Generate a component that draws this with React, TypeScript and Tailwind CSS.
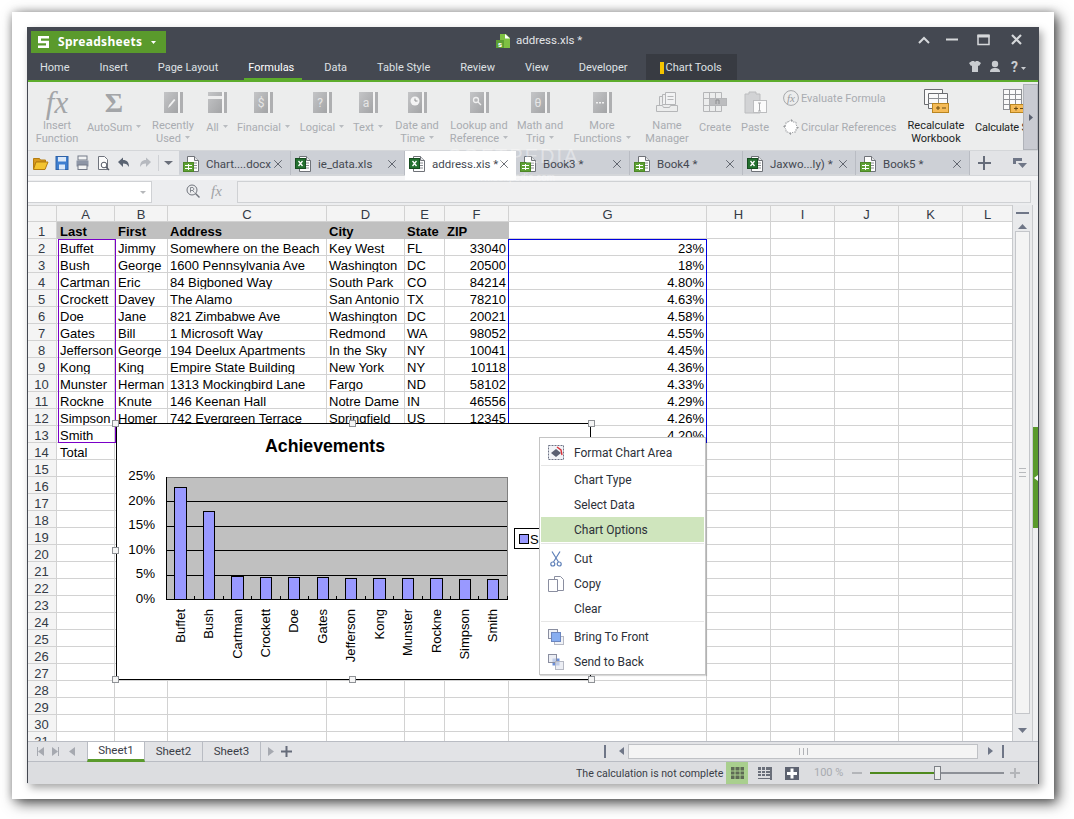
import { X } from 'lucide-react'
import type { ReactNode } from 'react'

const rows = [
  ['Buffet', 'Jimmy', 'Somewhere on the Beach', 'Key West', 'FL', '33040', '23%'],
  ['Bush', 'George', '1600 Pennsylvania Ave', 'Washington', 'DC', '20500', '18%'],
  ['Cartman', 'Eric', '84 Bigboned Way', 'South Park', 'CO', '84214', '4.80%'],
  ['Crockett', 'Davey', 'The Alamo', 'San Antonio', 'TX', '78210', '4.63%'],
  ['Doe', 'Jane', '821 Zimbabwe Ave', 'Washington', 'DC', '20021', '4.58%'],
  ['Gates', 'Bill', '1 Microsoft Way', 'Redmond', 'WA', '98052', '4.55%'],
  ['Jefferson', 'George', '194 Deelux Apartments', 'In the Sky', 'NY', '10041', '4.45%'],
  ['Kong', 'King', 'Empire State Building', 'New York', 'NY', '10118', '4.36%'],
  ['Munster', 'Herman', '1313 Mockingbird Lane', 'Fargo', 'ND', '58102', '4.33%'],
  ['Rockne', 'Knute', '146 Keenan Hall', 'Notre Dame', 'IN', '46556', '4.29%'],
  ['Simpson', 'Homer', '742 Evergreen Terrace', 'Springfield', 'US', '12345', '4.26%'],
  ['Smith', '', '', '', '', '', '4.20%'],
  ['Total', '', '', '', '', '', ''],
]

const columns = ['A', 'B', 'C', 'D', 'E', 'F', 'G', 'H', 'I', 'J', 'K', 'L']
const titles = ['Last', 'First', 'Address', 'City', 'State', 'ZIP']
const gridCols = 'grid grid-cols-[30px_58px_53px_159px_78px_40px_64px_198px_64px_64px_64px_64px_50px]'

const menuTabs = ['Home', 'Insert', 'Page Layout', 'Formulas', 'Data', 'Table Style', 'Review', 'View', 'Developer']

const bars = [
  { name: 'Buffet', x: 174, w: 12, top: 487 },
  { name: 'Bush', x: 203, w: 11, top: 511 },
  { name: 'Cartman', x: 231, w: 12, top: 576 },
  { name: 'Crockett', x: 260, w: 11, top: 577 },
  { name: 'Doe', x: 288, w: 11, top: 577 },
  { name: 'Gates', x: 317, w: 11, top: 577 },
  { name: 'Jefferson', x: 345, w: 11, top: 578 },
  { name: 'Kong', x: 373, w: 12, top: 578 },
  { name: 'Munster', x: 402, w: 11, top: 578 },
  { name: 'Rockne', x: 430, w: 12, top: 578 },
  { name: 'Simpson', x: 459, w: 11, top: 579 },
  { name: 'Smith', x: 487, w: 11, top: 579 },
]

const Caret = ({ color = '#b9bcc0' }: { color?: string }) => (
  <svg width="5" height="3" viewBox="0 0 5 3" className="inline-block ml-[4px] mb-[3px]">
    <path d="M0 0h5L2.5 3z" fill={color} />
  </svg>
)

const Book = ({ children }: { children?: ReactNode }) => (
  <svg width="19" height="21" viewBox="0 0 19 21">
    <defs>
      <linearGradient id="bookFill" x1="0" y1="0" x2="1" y2="1">
        <stop offset="0" stopColor="#c4c5c7" />
        <stop offset="1" stopColor="#a3a4a6" />
      </linearGradient>
    </defs>
    <rect x="0" y="0" width="14" height="21" fill="url(#bookFill)" />
    <rect x="14" y="0" width="2" height="21" fill="#f4f4f4" />
    <rect x="16" y="0" width="3" height="21" fill="#aeafb1" />
    {children}
  </svg>
)

const glyph = 'fill-[#e6e6e6]'

const ribbonItems: { lines: string[]; caret?: boolean; box: string; icon: ReactNode }[] = [
  {
    lines: ['Insert', 'Function'],
    box: 'w-[54px] ml-[3px]',
    icon: <span className="font-['Liberation_Serif',serif] italic text-[31px] leading-[21px] text-[#a3a5a8]">fx</span>,
  },
  {
    lines: ['AutoSum'],
    caret: true,
    box: 'w-[52px] ml-[4px]',
    icon: <span className="font-['Liberation_Serif',serif] font-bold text-[28px] leading-[21px] text-[#a3a5a8]">Σ</span>,
  },
  {
    lines: ['Recently', 'Used'],
    caret: true,
    box: 'w-[50px] ml-[8px]',
    icon: (
      <Book>
        <path d="M4 16l1-3 5-6 1.5 1-5 6z" fill="#f2f2f2" />
      </Book>
    ),
  },
  {
    lines: ['All'],
    caret: true,
    box: 'w-[26px] ml-[6px]',
    icon: (
      <Book>
        <rect x="0" y="4" width="14" height="3" fill="#eeeeee" />
      </Book>
    ),
  },
  {
    lines: ['Financial'],
    caret: true,
    box: 'w-[55px] ml-[6px]',
    icon: (
      <Book>
        <text x="7" y="15" textAnchor="middle" fontSize="12" className={glyph}>$</text>
      </Book>
    ),
  },
  {
    lines: ['Logical'],
    caret: true,
    box: 'w-[52px] ml-[5px]',
    icon: (
      <Book>
        <text x="7" y="15" textAnchor="middle" fontSize="12" className={glyph}>?</text>
      </Book>
    ),
  },
  {
    lines: ['Text'],
    caret: true,
    box: 'w-[34px] ml-[3px]',
    icon: (
      <Book>
        <text x="7" y="15" textAnchor="middle" fontSize="12" className={glyph}>a</text>
      </Book>
    ),
  },
  {
    lines: ['Date and', 'Time'],
    caret: true,
    box: 'w-[60px] ml-[2px]',
    icon: (
      <Book>
        <circle cx="7" cy="9" r="4.5" fill="#f4f4f4" />
        <path d="M7 6.5V9h2.5" stroke="#8f9092" fill="none" />
      </Book>
    ),
  },
  {
    lines: ['Lookup and', 'Reference'],
    caret: true,
    box: 'w-[62px] ml-[1px]',
    icon: (
      <Book>
        <circle cx="6" cy="8" r="2.5" stroke="#f0f0f0" strokeWidth="1.3" fill="none" />
        <path d="M8 10l3 3" stroke="#f0f0f0" strokeWidth="1.3" />
      </Book>
    ),
  },
  {
    lines: ['Math and', 'Trig'],
    caret: true,
    box: 'w-[60px]',
    icon: (
      <Book>
        <text x="7" y="15" textAnchor="middle" fontSize="12" className={glyph}>θ</text>
      </Book>
    ),
  },
  {
    lines: ['More', 'Functions'],
    caret: true,
    box: 'w-[60px] ml-[2px]',
    icon: (
      <Book>
        <path d="M3 10h2v1.5H3zM6 10h2v1.5H6zM9 10h2v1.5H9z" fill="#f0f0f0" />
      </Book>
    ),
  },
  {
    lines: ['Name', 'Manager'],
    box: 'w-[64px] ml-[3px]',
    icon: (
      <svg width="22" height="22" viewBox="0 0 22 22" fill="none" stroke="#b5b6b8">
        <path d="M3.5 15V5.5h3M6.5 14V3.5h3" />
        <path d="M9.5 1.5h10v12h-13" fill="#f2f3f4" />
        <path d="M9.5 1.5v12M11.5 5.5h6M11.5 8.5h6" />
        <path d="M.5 14.5h6l1 2h6l1-2h7v6H.5z" fill="#eceded" />
      </svg>
    ),
  },
  {
    lines: ['Create'],
    box: 'w-[32px]',
    icon: (
      <svg width="24" height="22" viewBox="0 0 24 22" fill="none" stroke="#b5b6b8">
        <path d="M.5 1.5h18v19H.5zM.5 7.5h18M.5 14.5h18M6.5 1.5v19M12.5 1.5v19" />
        <rect x="6.5" y="7.5" width="17" height="7" fill="#bcbdbf" />
        <path d="M13 13V9h3v4" stroke="#8c8d8f" />
      </svg>
    ),
  },
  {
    lines: ['Paste'],
    box: 'w-[32px] ml-[8px]',
    icon: (
      <svg width="23" height="23" viewBox="0 0 23 23">
        <path d="M1 3h4V1h7v2h4v19H1z" fill="#d2d3d5" stroke="#bcbdbf" />
        <rect x="9.5" y="9.5" width="13" height="12" fill="#fbfbfb" stroke="#bcbdbf" />
        <path d="M14 12h3M14 20h3M15.5 12v8" stroke="#a8a9ab" fill="none" />
      </svg>
    ),
  },
]

const RecalcIcon = () => (
  <svg width="25" height="24" viewBox="0 0 25 24" fill="none">
    <path d="M.5.5h18v15H.5z" fill="#fafafa" stroke="#6a6c70" />
    <path d="M4.5 4.5h19v15h-19z" fill="#fafafa" stroke="#6a6c70" />
    <path d="M4.5 9.5h19M4.5 14.5h19M14.5 4.5v15" stroke="#8e9094" />
    <rect x="8.5" y="14.5" width="16" height="9" fill="#f5bb57" stroke="#b98520" />
    <path d="M12 19h4M14 17v4M18 19h4" stroke="#6b4a10" />
  </svg>
)

const CalcIcon = () => (
  <svg width="24" height="24" viewBox="0 0 24 24" fill="none">
    <rect x=".5" y=".5" width="18" height="20" fill="#fafafa" stroke="#8e9094" />
    <path d="M.5 5.5h18M.5 10.5h18M.5 15.5h18M6.5.5v20M12.5.5v20" stroke="#8e9094" />
    <rect x="7.5" y="15.5" width="16" height="8" fill="#f5bb57" stroke="#b98520" />
    <path d="M11 19.5h4M13 17.5v4M17 19.5h4" stroke="#6b4a10" />
  </svg>
)

const DocIcon = ({ excel }: { excel?: boolean }) => (
  <svg width="17" height="16" viewBox="0 0 17 16" className="shrink-0">
    <path d="M4.5.5h7l4 4v11h-11z" fill="#fdfdfd" stroke="#6f7278" />
    <path d="M11.5.5v4h4" fill="#e4e5e7" stroke="#6f7278" />
    <path d="M11 7h3M11 9.5h3M11 12h3" stroke="#8a8d92" />
    {excel ? (
      <>
        <rect x=".5" y="2.5" width="10" height="10" fill="#23702f" stroke="#174d20" />
        <path d="M3.5 5l4 5M7.5 5l-4 5" stroke="#ffffff" strokeWidth="1.3" />
      </>
    ) : (
      <>
        <rect x=".5" y="6.5" width="10" height="9" fill="#5da032" stroke="#4c8627" />
        <path d="M2 9.5h7M2 12.5h7M5.5 8v6" stroke="#ffffff" />
      </>
    )}
  </svg>
)

const tabs = [
  { label: 'Chart....docx', box: 'w-[112px]', excel: false },
  { label: 'ie_data.xls', box: 'w-[114px]', excel: true },
  { label: 'address.xls *', box: 'w-[111px]', excel: true, active: true },
  { label: 'Book3 *', box: 'w-[114px]', excel: false },
  { label: 'Book4 *', box: 'w-[113px]', excel: false },
  { label: 'Jaxwo...ly) *', box: 'w-[113px]', excel: true },
  { label: 'Book5 *', box: 'w-[114px]', excel: false },
]

const ChartSvg = () => (
  <svg width="475" height="257" viewBox="116 423 475 257" shapeRendering="crispEdges" className="block">
    <rect x="116.5" y="423.5" width="474" height="256" fill="#ffffff" stroke="#000000" />
    <text x="325" y="452" textAnchor="middle" fontSize="17.7" fontWeight="700" fill="#000000" shapeRendering="auto">
      Achievements
    </text>
    <rect x="166.5" y="477.5" width="341" height="122" fill="#c0c0c0" stroke="#808080" />
    {[501, 526, 550, 575].map((y) => (
      <path key={y} d={`M167 ${y + 0.5}H507`} stroke="#000000" />
    ))}
    <path d="M166.5 477V600M166 599.5H508" stroke="#000000" fill="none" />
    {Array.from({ length: 13 }, (_, i) => (
      <path key={i} d={`M${Math.round(166 + i * 28.4) + 0.5} 596V600`} stroke="#000000" />
    ))}
    {['25%', '20%', '15%', '10%', '5%', '0%'].map((t, i) => (
      <text key={t} x="155" y={480 + i * 24.6} textAnchor="end" fontSize="13.33" fill="#000000">
        {t}
      </text>
    ))}
    {bars.map((b) => (
      <g key={b.name}>
        <rect x={b.x + 0.5} y={b.top + 0.5} width={b.w} height={599 - b.top} fill="#9999ff" stroke="#000000" />
        <text
          transform={`translate(${b.x + b.w / 2 + 4.5} 609) rotate(-90)`}
          textAnchor="end"
          fontSize="13"
          fill="#000000"
        >
          {b.name}
        </text>
      </g>
    ))}
    <rect x="514.5" y="528.5" width="70" height="20" fill="#ffffff" stroke="#000000" />
    <rect x="519.5" y="534.5" width="9" height="9" fill="#9999ff" stroke="#000000" />
    <text x="530" y="544" fontSize="13" fill="#000000">Series1</text>
  </svg>
)

const Handle = ({ box }: { box: string }) => (
  <div className={`absolute w-[7px] h-[7px] bg-[#f4f4f4] border border-[#8f9296] ${box}`} />
)

const MenuRow = ({ label, icon, active }: { label: string; icon?: ReactNode; active?: boolean }) => (
  <div className={`flex items-center h-[25px] mx-[1px] ${active ? 'bg-[#cfe5bd]' : ''}`}>
    <div className="w-[34px] flex justify-center ml-[-2px] mr-[1px]">{icon}</div>
    <span className="pt-[1px]">{label}</span>
  </div>
)

const MenuLine = () => <div className="h-px bg-[#e6e6e6] mx-[1px]" />

const ContextMenu = () => (
  <div className="absolute left-[512px] top-[232px] w-[167px] h-[238px] bg-white border border-[#c4c4c4] shadow-[1px_1px_1px_rgba(0,0,0,0.15)] pt-[2px] text-[12px] text-[#2c3038] font-['Roboto',sans-serif]">
    <MenuRow
      label="Format Chart Area"
      icon={
        <svg width="16" height="16" viewBox="0 0 16 16">
          <rect x=".5" y=".5" width="15" height="14" fill="#f2f4f8" stroke="#6d7285" strokeDasharray="2 1" />
          <path d="M3 8l5-4 5 4-5 4z" fill="#5a6072" />
          <path d="M9 2l4 3 1 5" stroke="#d8333a" strokeWidth="1.4" fill="none" />
        </svg>
      }
    />
    <MenuLine />
    <div className="h-[1px]" />
    <MenuRow label="Chart Type" />
    <MenuRow label="Select Data" />
    <MenuRow label="Chart Options" active />
    <div className="h-[1px]" />
    <MenuLine />
    <div className="h-[2px]" />
    <MenuRow
      label="Cut"
      icon={
        <svg width="12" height="16" viewBox="0 0 12 16" fill="none" stroke="#5f80b8" strokeWidth="1.2">
          <path d="M2 .5l6.5 10.5M10 .5L3.5 11" />
          <circle cx="2.8" cy="13" r="2" />
          <circle cx="9.2" cy="13" r="2" />
        </svg>
      }
    />
    <MenuRow
      label="Copy"
      icon={
        <svg width="16" height="16" viewBox="0 0 16 16" fill="#ffffff" stroke="#8a8ea0">
          <path d="M6.5.5h6l3 3v11h-9z" />
          <path d="M.5 3.5h9v12h-9z" />
        </svg>
      }
    />
    <MenuRow label="Clear" />
    <MenuLine />
    <div className="h-[2px]" />
    <MenuRow
      label="Bring To Front"
      icon={
        <svg width="16" height="16" viewBox="0 0 16 16">
          <rect x=".5" y=".5" width="9" height="9" fill="#f0f2f7" stroke="#8a8ea0" />
          <rect x="6.5" y="7.5" width="9" height="8" fill="#f0f2f7" stroke="#b6b9c4" />
          <rect x="3.5" y="3.5" width="9" height="9" fill="#88aef0" stroke="#6c86bf" />
        </svg>
      }
    />
    <MenuRow
      label="Send to Back"
      icon={
        <svg width="16" height="16" viewBox="0 0 16 16">
          <rect x="4.5" y="4.5" width="7" height="7" fill="#6c8fd8" />
          <rect x=".5" y=".5" width="8" height="8" fill="#e4e7ef" fillOpacity=".7" stroke="#8a8ea0" />
          <rect x="7.5" y="7.5" width="8" height="8" fill="#e4e7ef" fillOpacity=".7" stroke="#b6b9c4" />
        </svg>
      }
    />
  </div>
)

const Sheet = () => (
  <div className="relative flex-1 overflow-hidden bg-white font-['Liberation_Sans',sans-serif] text-[13px] leading-[19px] text-black">
    <div className={gridCols}>
      <div className="h-[17px] bg-[#f4f4f4] border-r border-b border-[#d2d2d2] border-t" />
      {columns.map((c) => (
        <div key={c} className="h-[17px] bg-[#f4f4f4] border-r border-b border-t border-[#d2d2d2] text-center text-[#333a45] leading-[17px]">
          {c}
        </div>
      ))}
      <div className="h-[17px] bg-[#f4f4f4] border-r border-b border-[#d2d2d2] text-center text-[#333a45]">1</div>
      {columns.map((c, i) => (
        <div
          key={c}
          className={`h-[17px] font-bold whitespace-nowrap overflow-hidden ${i < 2 ? 'pl-[3px]' : 'pl-[2px]'} ${i < 6 ? 'bg-[#c0c0c0]' : 'border-r border-b border-[#d2d2d2]'}`}
        >
          {titles[i]}
        </div>
      ))}
      {Array.from({ length: 30 }, (_, r) => (
        <div key={r} className="contents">
          <div className="h-[17px] bg-[#f4f4f4] border-r border-b border-[#d2d2d2] text-center text-[#333a45] overflow-hidden">{r + 2}</div>
          {columns.map((c, i) => (
            <div
              key={c}
              className={`h-[17px] pr-[2px] border-r border-b border-[#d2d2d2] overflow-hidden whitespace-nowrap ${i < 2 ? 'pl-[3px]' : 'pl-[2px]'} ${i >= 5 ? 'text-right' : ''}`}
            >
              {rows[r]?.[i] ?? ''}
            </div>
          ))}
        </div>
      ))}
    </div>

    {/* range highlights of the chart data */}
    <div className="absolute left-[31px] top-[34px] w-[58px] h-[204px] border border-[#7a00c8]" />
    <div className="absolute left-[481px] top-[34px] w-[199px] h-[204px] border border-[#0000e0]" />

    <div className="absolute left-[89px] top-[218px]">
      <ChartSvg />
    </div>
    <Handle box="left-[85px] top-[215px]" />
    <Handle box="left-[322px] top-[215px]" />
    <Handle box="left-[561px] top-[215px]" />
    <Handle box="left-[85px] top-[342px]" />
    <Handle box="left-[85px] top-[471px]" />
    <Handle box="left-[322px] top-[471px]" />
    <Handle box="left-[561px] top-[471px]" />

    <ContextMenu />
  </div>
)

const ScrollBar = () => (
  <div className="w-[20px] border-l border-[#c8cacd] bg-[#e9eaec] flex flex-col items-center">
    <div className="h-[2px] w-[13px] bg-[#6f7687] mt-[7px]" />
    <svg width="9" height="5" viewBox="0 0 9 5" className="mt-[10px]">
      <path d="M0 5l4.5-5L9 5z" fill="#6f7687" />
    </svg>
    <div className="mt-[2px] w-[15px] h-[483px] bg-[#f4f4f4] border border-[#c4c6ca] flex flex-col items-center justify-center gap-[3px]">
      <div className="w-[7px] h-px bg-[#b8babd]" />
      <div className="w-[7px] h-px bg-[#b8babd]" />
      <div className="w-[7px] h-px bg-[#b8babd]" />
    </div>
    <svg width="9" height="5" viewBox="0 0 9 5" className="mt-[14px]">
      <path d="M0 0l4.5 5L9 0z" fill="#6f7687" />
    </svg>
  </div>
)

const GreenStrip = () => (
  <div className="w-[6px] bg-[#eeeff1] border-l border-[#c8cacd] flex flex-col">
    <div className="h-[222px]" />
    <div className="h-[101px] bg-[#5a9a2c] flex items-center justify-end">
      <svg width="4" height="6" viewBox="0 0 4 6">
        <path d="M4 0v6L0 3z" fill="#ffffff" />
      </svg>
    </div>
  </div>
)

const Tri = ({ dir, color = '#a6a9b0' }: { dir: 'l' | 'r'; color?: string }) => (
  <svg width="6" height="9" viewBox="0 0 6 9">
    <path d={dir === 'l' ? 'M6 0v9L0 4.5z' : 'M0 0v9l6-4.5z'} fill={color} />
  </svg>
)

export default function App() {
  return (
    <div className="w-[1074px] h-[819px] bg-white p-[12px] font-['Roboto',sans-serif] overflow-hidden">
      <div className="w-[1042px] h-[787px] bg-white p-[15px] shadow-[4px_4px_13px_rgba(0,0,0,0.7),0_0_8px_rgba(0,0,0,0.2)]">
        <div className="relative w-[1012px] h-[757px] flex flex-col bg-[#eceded] shadow-[3px_4px_8px_rgba(0,0,0,0.35)] border-b border-r border-[#444851]">
          {/* title bar */}
          <div className="h-[27px] bg-[#444851] flex pl-[4px] pt-[4px] relative shrink-0">
            <div className="w-[135px] h-[22px] bg-[#5a9a2c] flex items-center text-white text-[12px] font-bold font-['Noto_Sans',sans-serif] tracking-[0.3px]">
              <svg width="11" height="12" viewBox="0 0 11 12" className="ml-[7px]">
                <path d="M0 0h11v2.5H3v2.2h8V12H0V9.5h8V7.2H0z" fill="#ffffff" />
              </svg>
              <span className="ml-[9px]">Spreadsheets</span>
              <svg width="5" height="3" viewBox="0 0 5 3" className="ml-[9px]">
                <path d="M0 0h5L2.5 3z" fill="#ffffff" />
              </svg>
            </div>
            <div className="ml-[330px] flex items-center h-[18px] mt-[1px] text-[11.5px] text-[#e3e5e8]">
              <svg width="15" height="14" viewBox="0 0 15 14">
                <path d="M4 0h6l4 4v10H4z" fill="#7ec142" />
                <path d="M9 0l5 4.5H9z" fill="#ffffff" />
                <rect x="0" y="6" width="8" height="8" fill="#5da032" />
                <text x="4" y="13" textAnchor="middle" fontSize="8" fontWeight="700" fill="#ffffff">s</text>
              </svg>
              <span className="ml-[5px]">address.xls *</span>
            </div>
            <div className="absolute right-[11px] top-[-1px] h-[27px]">
              <svg width="110" height="27" viewBox="0 0 110 27" fill="none" stroke="#d6d8db" strokeWidth="2" className="block">
                <path d="M2 17l5-5 5 5" />
                <path d="M29 13.5h12" />
                <path d="M61 9.5h11v9H61z" strokeWidth="1.5" />
                <path d="M60.5 10h12" strokeWidth="3" />
                <path d="M95 9l9 9M104 9l-9 9" strokeWidth="2.2" />
              </svg>
            </div>
          </div>

          {/* menu tabs */}
          <div className="h-[28px] bg-[#444851] border-b-2 border-[#5dac2c] flex shrink-0 pl-[13px] gap-[30px] text-[11px] text-[#dfe1e4] relative">
            {menuTabs.map((t) => (
              <div key={t} className="relative h-[26px] pt-[2px] flex items-center">
                <span className={t === 'Formulas' ? 'text-white' : ''}>{t}</span>
                {t === 'Formulas' && <div className="absolute left-[-4px] right-[-8px] bottom-0 h-[2px] bg-[#5dac2c]" />}
              </div>
            ))}
            <div className="ml-[-12px] w-[91px] h-[26px] pt-[2px] bg-[#383b42] flex items-center pl-[14px]">
              <div className="w-[4px] h-[12px] bg-[#f5c400] mr-[2px]" />
              <span>Chart Tools</span>
            </div>
            <div className="absolute right-[8px] top-0 h-[26px] flex items-center">
              <svg width="62" height="16" viewBox="0 0 62 16" fill="#c9ccd0">
                <path d="M1 4l3-2h2l1 1 1-1h2l3 2-2 3-1-.5V13H4V6.5L3 7z" />
                <circle cx="27" cy="5" r="3.2" />
                <path d="M22 13c0-3 2-4 5-4s5 1 5 4z" />
                <text x="43" y="13" fontSize="14" fontWeight="700">?</text>
                <path d="M53 8h5l-2.5 3z" />
              </svg>
            </div>
          </div>

          {/* ribbon */}
          <div className="relative h-[68px] shrink-0 bg-[#eceded] flex overflow-hidden text-[11px] leading-[13px] text-[#a9acb1]">
            {ribbonItems.map((it) => (
              <div key={it.lines[0]} className={`${it.box} shrink-0 flex flex-col items-center`}>
                <div className="h-[22px] mt-[9px] flex items-center justify-center">{it.icon}</div>
                <div className={`text-center whitespace-nowrap ${it.lines.length === 1 ? 'mt-[8px]' : 'mt-[6px]'}`}>
                  {it.lines.map((l, i) => (
                    <div key={l}>
                      {l}
                      {it.caret && i === it.lines.length - 1 && <Caret />}
                    </div>
                  ))}
                </div>
              </div>
            ))}
            <div className="w-[121px] ml-[12px] shrink-0 flex flex-col pt-[8px]">
              <div className="flex items-center h-[16px]">
                <svg width="16" height="16" viewBox="0 0 16 16" fill="none" stroke="#a6a8ab">
                  <circle cx="8" cy="8" r="7.4" />
                  <text x="8" y="11.500" textAnchor="middle" fontSize="11" stroke="none" fill="#9a9c9f" fontStyle="italic" fontFamily="Liberation Serif">fx</text>
                </svg>
                <span className="ml-[2px]">Evaluate Formula</span>
              </div>
              <div className="flex items-center h-[16px] mt-[13px] whitespace-nowrap">
                <svg width="16" height="16" viewBox="0 0 16 16">
                  <path d="M5 3l3-2 2 2h3v3l2 2-2 2v3h-3l-2 2-3-2H3v-3L1 8l2-2V3z" fill="#ffffff" stroke="#a6a8ab" strokeDasharray="2 1" />
                  <path d="M8 0v3l2-1.500zM16 8h-3l1.500 2zM8 16v-3l-2 1.500zM0 8h3L1.500 6z" fill="#9a9c9f" />
                </svg>
                <span className="ml-[2px]">Circular References</span>
              </div>
            </div>
            <div className="w-[64px] shrink-0 flex flex-col items-center text-[#1c1f24]">
              <div className="h-[24px] mt-[7px]">
                <RecalcIcon />
              </div>
              <div className="mt-[6px] text-center">
                <div>Recalculate</div>
                <div>Workbook</div>
              </div>
            </div>
            <div className="w-[80px] ml-[7px] shrink-0 flex flex-col items-center text-[#1c1f24]">
              <div className="h-[24px] mt-[7px]">
                <CalcIcon />
              </div>
              <div className="mt-[8px] whitespace-nowrap self-start tracking-[-0.2px]">Calculate Sheet</div>
            </div>
            <div className="absolute right-0 top-[2px] h-[66px] w-[15px] bg-[#c9cbd2] border border-[#b0b3b9] flex items-center justify-center">
              <svg width="4" height="7" viewBox="0 0 4 7">
                <path d="M0 0v7l4-3.500z" fill="#5a6070" />
              </svg>
            </div>
          </div>

          {/* quick access and document tabs */}
          <div className="h-[26px] shrink-0 flex border-t border-[#d4d6d9] border-b-2 bg-[#cdd0d6] text-[11.5px] text-[#444851]">
            <div className="w-[152px] h-[24px] bg-[#e9eaec] flex items-center pl-[6px] shrink-0">
              <svg width="144" height="16" viewBox="0 0 144 16" className="block">
                <path d="M.5 3.500h6l1 1.500h5v2H3L.5 14z" fill="#d99a1f" stroke="#b47c10" />
                <path d="M3 7h12l-3 7.500H.5z" fill="#f4c430" stroke="#b47c10" />
                <rect x="23" y="1.500" width="12" height="13" fill="#3f7fd0" stroke="#2f62a8" />
                <rect x="25" y="2" width="8" height="4.500" fill="#dbe8f8" />
                <rect x="26" y="9.500" width="6" height="5" fill="#dbe8f8" />
                <rect x="45" y="1" width="9" height="4" fill="#f2f3f4" stroke="#747a88" />
                <rect x="43.500" y="5.500" width="12" height="6" fill="#8d95a6" />
                <rect x="45" y="10" width="9" height="4.500" fill="#f2f3f4" stroke="#747a88" />
                <path d="M65.500 1.500h6l3 3v10h-9z" fill="#fbfbfb" stroke="#70747e" />
                <circle cx="71" cy="10" r="2.800" fill="#ffffff" stroke="#555a66" />
                <path d="M73 12l3 3" stroke="#555a66" strokeWidth="1.500" />
                <path d="M85 7l5-4.500V5c4 0 6 2.500 6 7-1.500-2.500-3-3.500-6-3.500V12z" fill="#5a6372" />
                <path d="M118 7l-5-4.500V5c-4 0-6 2.500-6 7 1.500-2.500 3-3.500 6-3.500V12z" fill="#b6b9bf" />
                <path d="M125.500 0v16" stroke="#cfd1d5" />
                <path d="M131 6h9l-4.500 4z" fill="#6a6f7a" />
              </svg>
            </div>
            {tabs.map((t) => (
              <div
                key={t.label}
                className={`${t.box} h-[24px] flex items-start pt-[5px] pl-[4px] shrink-0 relative ${t.active ? 'bg-white h-[29px] z-10' : 'border-r border-[#b9bcc3]'}`}
              >
                <DocIcon excel={t.excel} />
                <span className="ml-[6px] whitespace-nowrap leading-[17px]">{t.label}</span>
                <X size={14} strokeWidth={1.4} className="absolute right-[5px] top-[6px] text-[#4a4e58]" />
              </div>
            ))}
            <div className="flex-1 h-[24px] bg-[#e2e3e6] flex items-center relative">
              <svg width="14" height="14" viewBox="0 0 14 14" className="ml-[8px]">
                <path d="M6 0v14M0 7h13" stroke="#666c7a" strokeWidth="2" />
              </svg>
              <svg width="14" height="13" viewBox="0 0 14 13" className="ml-[21px]">
                <path d="M0 1h9v3H3v3H0z" fill="#6f7687" />
                <path d="M5 6h9l-4.500 5z" fill="#6f7687" />
              </svg>
            </div>
          </div>

          {/* formula bar */}
          <div className="h-[29px] shrink-0 bg-[#ecedef] border-t-[4px] border-[#f6f6f7] flex items-start pt-[1px] pr-[7px]">
            <div className="relative w-[125px] h-[22px] bg-white border border-[#cfd1d4] border-l-0 flex items-center justify-end pr-[5px]">
              <svg width="6" height="3" viewBox="0 0 6 3">
                <path d="M0 0h6L3 3z" fill="#b5b7ba" />
              </svg>
            </div>
            <svg width="15" height="15" viewBox="0 0 15 15" fill="none" stroke="#70747c" className="ml-[34px] mt-[3px]">
              <circle cx="6" cy="6" r="5" />
              <path d="M9.500 9.500l4 4" strokeWidth="1.500" />
              <path d="M4.500 8.500V3.500h2.500l1 1.500-1 1.500h-2.500M6.500 6.500l2 2" strokeWidth=".8" />
            </svg>
            <span className="ml-[10px] mt-[1px] font-['Liberation_Serif',serif] italic text-[15px] leading-[18px] text-[#a0a2a6]">fx</span>
            <div className="ml-[15px] flex-1 h-[22px] bg-[#f0f0f1] border border-[#cfd1d4]" />
          </div>

          {/* sheet area */}
          <div className="flex h-[536px] shrink-0 overflow-hidden">
            <Sheet />
            <ScrollBar />
            <GreenStrip />
          </div>

          {/* sheet tabs and horizontal scroll */}
          <div className="h-[21px] shrink-0 bg-[#e2e3e6] border-t border-b border-[#b9bcc3] flex items-center text-[11.5px] text-[#3a3e47] relative">
            <div className="w-[60px] flex items-center gap-[8px] pl-[10px] shrink-0">
              <div className="flex items-center">
                <div className="w-[1px] h-[9px] bg-[#a6a9b0]" />
                <Tri dir="l" />
              </div>
              <div className="flex items-center">
                <Tri dir="r" />
                <div className="w-[1px] h-[9px] bg-[#a6a9b0]" />
              </div>
              <div className="ml-[2px]">
                <Tri dir="l" />
              </div>
            </div>
            <div className="w-[58px] h-[20px] pt-[2px] bg-white border-b-[3px] border-[#5a9a2c] border-l border-r border-l-[#b9bcc3] border-r-[#b9bcc3] flex items-center justify-center shrink-0">
              Sheet1
            </div>
            <div className="w-[58px] h-[19px] pt-[1px] border-r border-[#b9bcc3] flex items-center justify-center shrink-0">Sheet2</div>
            <div className="w-[58px] h-[19px] pt-[1px] border-r border-[#b9bcc3] flex items-center justify-center shrink-0">Sheet3</div>
            <div className="ml-[7px]">
              <Tri dir="r" />
            </div>
            <svg width="11" height="11" viewBox="0 0 11 11" className="ml-[7px]">
              <path d="M5.500 0v11M0 5.500h11" stroke="#666c7a" strokeWidth="2" />
            </svg>
            <div className="absolute left-[577px] top-[3px] w-[2px] h-[13px] bg-[#6f7687]" />
            <div className="absolute left-[592px] top-[5px]">
              <svg width="5" height="8" viewBox="0 0 5 8">
                <path d="M5 0v8L0 4z" fill="#6f7687" />
              </svg>
            </div>
            <div className="absolute left-[601px] top-[2px] w-[350px] h-[15px] bg-[#f4f4f4] border border-[#bfc1c5] flex items-center justify-center gap-[3px]">
              <div className="w-px h-[7px] bg-[#b0b2b6]" />
              <div className="w-px h-[7px] bg-[#b0b2b6]" />
              <div className="w-px h-[7px] bg-[#b0b2b6]" />
            </div>
            <div className="absolute left-[961px] top-[5px]">
              <svg width="5" height="8" viewBox="0 0 5 8">
                <path d="M0 0v8l5-4z" fill="#6f7687" />
              </svg>
            </div>
            <div className="absolute left-[975px] top-[3px] w-[2px] h-[13px] bg-[#6f7687]" />
          </div>

          {/* status bar */}
          <div className="flex-1 bg-[#dcdde0] flex items-center text-[11px] text-[#3a3e47]">
            <span className="ml-[549px] whitespace-nowrap w-[150px] pt-[1px] text-[10.6px]">The calculation is not complete</span>
            <div className="w-[22px] h-[22px] bg-[#a9cf8e] flex items-center justify-center">
              <svg width="13" height="12" viewBox="0 0 13 12" fill="#5e6a55">
                <path d="M0 0h13v12H0z" />
                <path d="M0 3.500h13v1H0zM0 7.500h13v1H0zM3.500 0h1v12h-1zM8.500 0h1v12h-1z" fill="#a9cf8e" />
              </svg>
            </div>
            <svg width="14" height="13" viewBox="0 0 14 13" className="ml-[10px]" fill="#6a6f7a">
              <path d="M0 0h12v9H0z" />
              <path d="M0 3h12v1H0zM0 6h12v1H0zM3 0h1v9H3zM7 0h1v9H7z" fill="#dcdde0" />
              <path d="M12 0h2v13h-2zM0 11h12v1H0z" strokeDasharray="1 1" />
            </svg>
            <svg width="14" height="13" viewBox="0 0 14 13" className="ml-[13px]">
              <rect width="14" height="13" fill="#5d6270" />
              <path d="M7 1.500v10M2 6.500h10" stroke="#ffffff" strokeWidth="3" />
            </svg>
            <span className="w-[31px] ml-[15px] whitespace-nowrap text-[#a8abb0]">100 %</span>
            <div className="w-[10px] h-[2px] bg-[#b3b5b9] ml-[7px]" />
            <div className="relative ml-[8px] w-[134px] h-[2px] bg-[#8d9097]">
              <div className="w-[64px] h-[2px] bg-[#4f8a1e]" />
              <div className="absolute left-[64px] top-[-6px] w-[7px] h-[14px] bg-[#eceded] border border-[#7d8086]" />
            </div>
            <svg width="10" height="10" viewBox="0 0 10 10" className="ml-[6px]">
              <path d="M5 0v10M0 5h10" stroke="#b3b5b9" strokeWidth="2" />
            </svg>
          </div>

          {/* dark window edge over the panels */}
          <div className="absolute left-0 top-0 bottom-0 w-px bg-[#444851] z-30" />

          {/* watermark sits on the screenshot */}
          <div className="absolute left-[421px] top-[114px] text-[20px] tracking-[2px] text-white/40 font-['Liberation_Sans',sans-serif] pointer-events-none z-20">
            SOFTPEDIA
          </div>
          <div className="absolute left-[442px] top-[143px] text-[10px] text-white/40 font-['Liberation_Sans',sans-serif] pointer-events-none z-20">
            www.softpedia.com
          </div>
        </div>
      </div>
    </div>
  )
}
